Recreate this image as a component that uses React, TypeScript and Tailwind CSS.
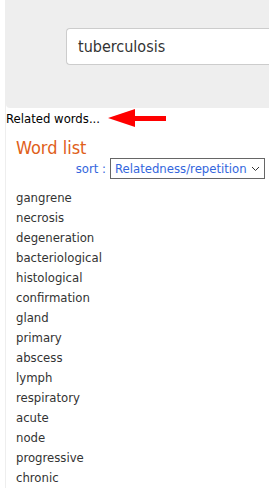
const WORDS = [
  "gangrene",
  "necrosis",
  "degeneration",
  "bacteriological",
  "histological",
  "confirmation",
  "gland",
  "primary",
  "abscess",
  "lymph",
  "respiratory",
  "acute",
  "node",
  "progressive",
  "chronic",
];

function Arrow() {
  return (
    <svg width="60" height="20" viewBox="0 0 60 20" className="ml-[8px] shrink-0">
      <polygon points="0,9 27,0 27,7 58,7 58,12 27,12 27,18" fill="#ff0000" />
    </svg>
  );
}

export default function App() {
  return (
    <div className="min-h-screen bg-white font-['DejaVu_Sans_Condensed',sans-serif] text-[#333]">
      <div className="ml-[5px] border-l border-[#eeeeee]">
        {/* search panel */}
        <div className="h-[108px] rounded-bl-[4px] bg-[#eeeeee] pl-[60px] pt-[28px]">
          <div className="flex h-[37px] items-center rounded-l-[4px] border border-r-0 border-[#cccccc] bg-white pl-[11px] text-[16px] text-[#333]">
            tuberculosis
          </div>
        </div>

        <div className="flex items-center pt-[1px]">
          <span className="text-[13px] text-black">Related words...</span>
          <Arrow />
        </div>

        <div className="pl-[10px]">
          <h2 className="mt-[7px] text-[18px] leading-[24px] text-[#e0601a]">Word list</h2>
          <div className="mt-[-2px] flex items-center justify-end pr-[4px]">
            <span className="mr-[4px] text-[13px] text-[#3366dd]">sort :</span>
            <div className="flex h-[21px] w-[155px] items-center justify-between border border-[#666] px-[4px] text-[13px] text-[#3366dd]">
              <span>Relatedness/repetition</span>
              <svg width="9" height="6" viewBox="0 0 9 6">
                <path d="M1 1 L4.5 4.5 L8 1" fill="none" stroke="#333" strokeWidth="1" />
              </svg>
            </div>
          </div>

          <ul className="mt-[9px]">
            {WORDS.map((w) => (
              <li key={w} className="text-[13px] leading-[20px] text-[#333]">
                {w}
              </li>
            ))}
          </ul>
        </div>
      </div>
    </div>
  );
}
